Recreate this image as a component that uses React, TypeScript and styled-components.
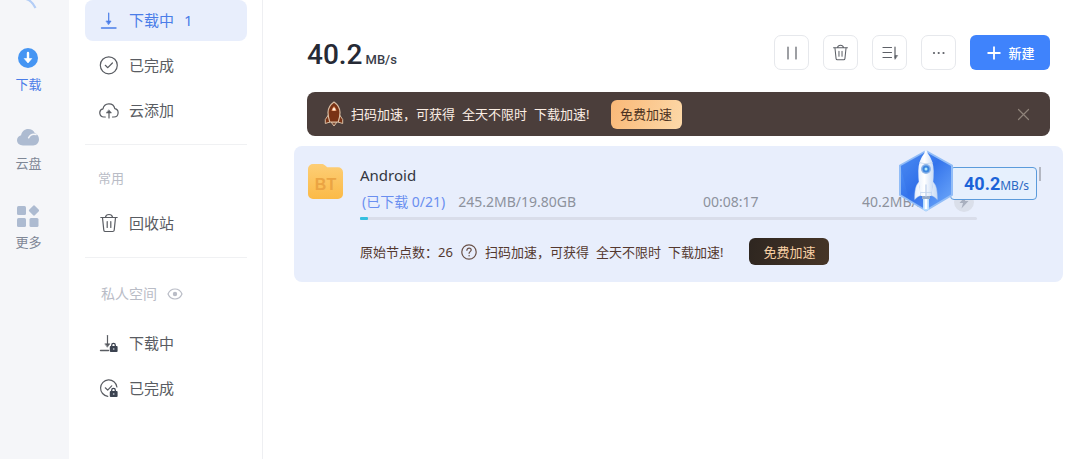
import React from 'react';
import styled, { createGlobalStyle, css } from 'styled-components';

const GlobalStyle = createGlobalStyle`
  *, *::before, *::after { box-sizing: border-box; }
  body {
    margin: 0;
    background: #fff;
    color: #43464d;
    font-family: "Noto Sans", "Noto Sans CJK SC", sans-serif;
    font-size: 13px;
    line-height: 20px;
  }
  button { font: inherit; cursor: pointer; }
  a { color: inherit; text-decoration: none; }
  svg { display: block; flex: none; }
  h1, h2, p { margin: 0; font-weight: 400; }
`;

const Shell = styled.div`
  display: flex;
  min-height: 100vh;
  overflow: hidden;
`;

/* Left rail */

const Rail = styled.nav`
  flex: none;
  width: 69px;
  padding-right: 12px;
  background: #f5f6f9;
  display: flex;
  flex-direction: column;
  align-items: center;
`;

const RailItem = styled.a<{ $active?: boolean }>`
  display: flex;
  flex-direction: column;
  align-items: center;
  gap: 5px;
  margin-bottom: 32px;
  color: ${(p) => (p.$active ? '#4a7de8' : '#7f8796')};
`;

/* Sidebar */

const Sidebar = styled.aside`
  flex: none;
  width: 194px;
  padding: 0 15px 0 16px;
  border-right: 1px solid #eeeff2;
`;

const NavGroup = styled.nav`
  display: flex;
  flex-direction: column;
  gap: 4px;
  padding-bottom: 13px;

  & ~ h2 { border-top: 1px solid #f0f1f3; }
`;

const NavItem = styled.a<{ $active?: boolean }>`
  display: flex;
  align-items: center;
  gap: 10px;
  height: 41px;
  padding: 0 0 2px 14px;
  border-radius: 8px;
  font-size: 15px;
  color: #595c62;
  ${(p) =>
    p.$active &&
    css`
      background: #e8eefc;
      color: #4a7de8;
    `}
`;

const GroupTitle = styled.h2<{ $roomy?: boolean }>`
  display: flex;
  align-items: center;
  gap: 10px;
  padding: ${(p) => (p.$roomy ? '26px 16px 19px' : '23px 13px 15px')};
  font-size: ${(p) => (p.$roomy ? '14px' : '13px')};
  line-height: 20px;
  color: #b9bcc6;
`;

const PlainButton = styled.button`
  display: flex;
  padding: 0;
  border: 0;
  background: none;
  color: inherit;
`;

/* Main column */

const Main = styled.main`
  flex: 1;
  min-width: 0;
  padding: 35px 17px 0 31px;
`;

const Header = styled.header`
  display: flex;
  align-items: center;
  justify-content: space-between;
  height: 35px;
  margin: 0 13px 22px;
`;

const TotalSpeed = styled.h1`
  padding-top: 3px;
  font-family: Roboto, sans-serif;
  font-size: 28px;
  font-weight: 500;
  line-height: 35px;
  color: #262a35;
`;

const Unit = styled.span`
  margin-left: 3px;
  font-size: 13px;
  line-height: 1;
  color: #3a3e49;
`;

const Toolbar = styled.div`
  display: flex;
  gap: 14px;
`;

const ToolButton = styled.button`
  display: flex;
  align-items: center;
  justify-content: center;
  width: 35px;
  height: 35px;
  padding: 0;
  border: 1px solid #e6e8ec;
  border-radius: 7px;
  background: #fff;
  color: #5d6067;
`;

const NewButton = styled.button`
  display: flex;
  align-items: center;
  justify-content: center;
  gap: 7px;
  width: 80px;
  height: 35px;
  padding: 0 0 0 2px;
  border: 0;
  border-radius: 6px;
  background: #3f83fc;
  color: #fff;
  font-size: 13px;
  font-weight: 500;
`;

const Banner = styled.section`
  display: flex;
  align-items: center;
  height: 44px;
  margin: 0 13px 10px;
  padding: 0 20px 0 17px;
  border-radius: 8px;
  background: #4b3e3b;
  color: #fbeee4;

  & > svg { margin-right: 7px; }
  & > button:last-child { margin-left: auto; color: #8f837a; }
`;

const Pitch = styled.p`
  display: flex;
  gap: 7px;
  white-space: nowrap;
`;

const BoostButton = styled.button<{ $dark?: boolean }>`
  border: 0;
  padding: 0;
  border-radius: 6px;
  white-space: nowrap;
  ${(p) =>
    p.$dark
      ? css`
          width: 80px;
          height: 27px;
          margin-left: 26px;
          background: linear-gradient(100deg, #2e2620, #463527);
          color: #f7cfa4;
        `
      : css`
          width: 71px;
          height: 29px;
          margin-left: 21px;
          background: linear-gradient(110deg, #f9b877, #fdd9a9);
          color: #4d3322;
        `}
`;

/* Task card */

const Card = styled.article`
  position: relative;
  display: flex;
  gap: 16px;
  padding: 17px 86px 17px 13px;
  border-radius: 8px;
  background: #e8eefc;
`;

const CardBody = styled.div`
  flex: 1;
  min-width: 0;
`;

const TaskName = styled.h2`
  font-size: 15px;
  line-height: 24px;
  color: #33363f;
`;

const Stats = styled.div`
  display: grid;
  grid-template-columns: 343fr 159fr 115fr;
  align-items: center;
  height: 30px;
  font-size: 14px;
  color: #8d929d;
`;

const StatCell = styled.div`
  display: flex;
  align-items: center;
  gap: 13px;
  min-width: 0;
  white-space: nowrap;
`;

const FileCount = styled.span`
  padding-left: 2px;
  color: #6a8ff0;
`;

const RoundIcons = styled.span`
  display: flex;
  gap: 4px;
  margin-left: auto;
  padding-right: 3px;
`;

const Track = styled.div`
  height: 3px;
  border-radius: 2px;
  background: #d9ddea;
`;

const Fill = styled.div`
  height: 3px;
  border-radius: 1px;
  background: #35bfe0;
`;

const Nodes = styled.div`
  display: flex;
  align-items: center;
  margin-top: 18px;
  color: #54382f;
`;

const HelpButton = styled(PlainButton)`
  margin: 0 8px;
  color: #6a5148;
`;

/* Floating speed widget that hovers over the card */

const FloatingSpeed = styled.div`
  position: absolute;
  top: 3px;
  right: 26px;
  display: flex;
  align-items: center;
`;

const SpeedTag = styled.div`
  display: flex;
  align-items: baseline;
  width: 87px;
  height: 33px;
  margin: 4px 0 0 -5px;
  padding-left: 13px;
  border: 1px solid #5b9bdb;
  border-radius: 4px;
  background: #e6f0fd;
  line-height: 31px;
  color: #2a68c4;
`;

const SpeedDigits = styled.strong`
  font-family: Roboto, sans-serif;
  font-size: 18px;
  color: #1b63d8;
`;

const SpeedUnit = styled.span`
  font-size: 12px;
`;

const HexWrap = styled.div`
  position: relative;
  z-index: 1;
`;

const Scroller = styled.span`
  position: absolute;
  top: 21px;
  right: 22px;
  width: 2px;
  height: 14px;
  background: #b3b7c2;
`;

/* Icons */

const stroke = {
  fill: 'none',
  stroke: 'currentColor',
  strokeWidth: 1.2,
  strokeLinecap: 'round' as const,
  strokeLinejoin: 'round' as const,
};

const AvatarRing = () => (
  <svg width="57" height="47" viewBox="0 0 57 47" fill="none">
    <path d="M26 -1C30 0 33 3 35.500 8" stroke="#b3cdf6" strokeWidth="2.200" />
  </svg>
);

const RailDownload = () => (
  <svg width="22" height="22" viewBox="0 0 22 22">
    <circle cx="11" cy="11" r="10" fill="#4595f3" />
    <path d="M11 6v8" stroke="#fff" strokeWidth="2.400" strokeLinecap="round" />
    <path d="M7.200 11.500h7.600L11 16z" fill="#fff" stroke="#fff" strokeWidth="0.600" strokeLinejoin="round" />
  </svg>
);

const RailCloud = () => (
  <svg width="24" height="22" viewBox="0 0 24 22">
    <path d="M7 19.500C3.500 19.500 1 17.300 1 14.300c0-2.500 1.700-4.500 4.100-5C5.600 5.500 8.600 3 12.200 3c3 0 5.400 1.500 6.500 4C21.500 8 23 10.500 23 13.300c0 3.500-2.500 6.200-5.900 6.200z" fill="#adbbd1" />
    <path d="M20 8.500c-3.400-.9-6 .5-7.400 3.300" stroke="#f5f6f9" strokeWidth="1.500" fill="none" strokeLinecap="round" />
  </svg>
);

const RailMore = () => (
  <svg width="22" height="22" viewBox="0 0 22 22" fill="#adbbd1">
    <rect x="0" y="1" width="9" height="9" rx="1.500" />
    <rect x="0" y="13" width="9" height="9" rx="1.500" />
    <rect x="12.500" y="13" width="9" height="9" rx="1.500" />
    <rect x="13" y="1.500" width="8" height="8" rx="1.500" transform="rotate(45 17 5.500)" />
  </svg>
);

const Lock = () => (
  <g>
    <path d="M12.700 13.500v-1.300a1.800 1.800 0 0 1 3.600 0v1.300" fill="none" stroke="#3c4350" strokeWidth="1.300" />
    <rect x="10.800" y="13" width="7.800" height="6" rx="1" fill="#3c4350" stroke="none" />
    <circle cx="14.700" cy="16" r="0.900" fill="#aab0ba" stroke="none" />
  </g>
);

const DownloadIcon = ({ locked }: { locked?: boolean }) => (
  <svg width="20" height="20" viewBox="0 0 20 20" {...stroke}>
    <path d={locked ? 'M1.500 17.500h8' : 'M2.500 18h14.500'} strokeWidth="1.400" />
    <path d={locked ? 'M8.500 2.500v9' : 'M9.700 3v9'} />
    <path d={locked ? 'M6.200 10.800h4.600l-2.300 3.200z' : 'M7.300 11h4.800l-2.400 3.500z'} fill="currentColor" strokeWidth="0.600" />
    {locked && <Lock />}
  </svg>
);

const DoneIcon = ({ locked }: { locked?: boolean }) => (
  <svg width="20" height="20" viewBox="0 0 20 20" {...stroke}>
    {locked ? (
      <path d="M8.800 18.300A8.200 8.200 0 1 1 17.900 9" />
    ) : (
      <circle cx="9.800" cy="10.300" r="8.500" />
    )}
    <path d={locked ? 'M6.300 9.800l2.400 2.300 4-4.300' : 'M6.300 10.300l2.500 2.400 4.600-4.700'} />
    {locked && <Lock />}
  </svg>
);

const CloudAddIcon = () => (
  <svg width="20" height="20" viewBox="0 0 20 20" {...stroke}>
    <path d="M6.300 17H5A4.100 4.100 0 0 1 4 8.900 6 6 0 0 1 15.800 8.700 4.200 4.200 0 0 1 15 17h-1.500" />
    <path d="M10 18v-5" />
    <path d="M7.500 13h5L10 10z" fill="currentColor" strokeWidth="0.500" />
  </svg>
);

const TrashIcon = ({ size = 20 }: { size?: number }) => (
  <svg width={size} height={size} viewBox="0 0 20 20" {...stroke}>
    <path d="M1.800 4.500h16.400M6.500 4.200C6.800 2.500 7.800 1.500 10 1.500s3.200 1 3.500 2.700" />
    <path d="M3.500 4.800l1.300 12.400c.1.900.6 1.300 1.500 1.300h7.400c.9 0 1.400-.4 1.500-1.300l1.300-12.400" />
    <path d="M8.200 8.500v6M11.800 8.500v6" />
  </svg>
);

const EyeIcon = () => (
  <svg width="16" height="14" viewBox="0 0 16 14" {...stroke}>
    <path d="M1 7C2.500 3.500 5 2 8 2s5.500 1.500 7 5c-1.500 3.500-4 5-7 5S2.500 10.500 1 7z" />
    <circle cx="8" cy="7" r="1.600" fill="currentColor" />
  </svg>
);

const PauseIcon = () => (
  <svg width="16" height="16" viewBox="0 0 16 16" {...stroke}>
    <path d="M4 2v12M12 2v12" />
  </svg>
);

const SortIcon = () => (
  <svg width="18" height="16" viewBox="0 0 18 16" {...stroke}>
    <path d="M2 2.500h8.500M2 7.500h8.500M2 12.500h8.500M14 2v11" />
    <path d="M14 14v-3.500h2.300z" fill="currentColor" strokeWidth="0.600" />
  </svg>
);

const DotsIcon = () => (
  <svg width="14" height="4" viewBox="0 0 14 4" fill="currentColor">
    <circle cx="2" cy="2" r="1.100" />
    <circle cx="6.700" cy="2" r="1.100" />
    <circle cx="11.500" cy="2" r="1.100" />
  </svg>
);

const PlusIcon = () => (
  <svg width="14" height="14" viewBox="0 0 14 14">
    <path d="M7 .5v13M.5 7h13" stroke="#fff" strokeWidth="1.800" />
  </svg>
);

const CloseIcon = () => (
  <svg width="13" height="13" viewBox="0 0 13 13" {...stroke}>
    <path d="M1.500 1.500l10 10M11.500 1.500l-10 10" />
  </svg>
);

const HelpIcon = () => (
  <svg width="16" height="16" viewBox="0 0 16 16" {...stroke}>
    <circle cx="8" cy="8" r="7.200" />
    <path d="M5.900 6.300c0-1.300.9-2.200 2.200-2.200 1.200 0 2.100.8 2.100 1.900 0 1.600-2.100 1.700-2.100 3.300" />
    <path d="M8.100 11.600v.2" strokeWidth="1.400" />
  </svg>
);

const BannerRocket = () => (
  <svg width="20" height="26" viewBox="0 0 20 26">
    <path d="M7 21l3 4 3-4z" fill="#7b4a33" stroke="#d9bda3" strokeWidth="1" strokeLinejoin="round" />
    <path d="M5 13L1.300 18.500V22.500L6 21zM15 13l3.700 5.500V22.500L14 21z" fill="#7a3315" stroke="#d9bda3" strokeWidth="1" strokeLinejoin="round" />
    <path d="M10 1C6.500 3.500 4 7 4 11.500c0 3.500.8 6.500 1.800 9.500h8.400c1-3 1.800-6 1.800-9.500C16 7 13.500 3.500 10 1z" fill="#7a3315" stroke="#d9bda3" strokeWidth="1.200" strokeLinejoin="round" />
    <path d="M7.600 10h4.800C12 8 11.300 6.500 10 5.300 8.700 6.500 8 8 7.600 10z" fill="#e59a6c" />
    <circle cx="10" cy="8.300" r="1.200" fill="#fff0e2" />
  </svg>
);

const BtFolder = () => (
  <svg width="37" height="37" viewBox="0 0 37 37">
    <defs>
      <linearGradient id="folder" x1="0" y1="0" x2="0" y2="1">
        <stop offset="0" stopColor="#fdce76" />
        <stop offset="1" stopColor="#fbba47" />
      </linearGradient>
    </defs>
    <path d="M1 6a5 5 0 0 1 5-5h8.500c1.300 0 2.400.4 3.400 1.300L20.300 4.300H31a5 5 0 0 1 5 5V31a5 5 0 0 1-5 5H6a5 5 0 0 1-5-5z" fill="url(#folder)" />
    <text x="18.500" y="26.500" textAnchor="middle" fontFamily="Liberation Sans, sans-serif" fontWeight="700" fontSize="16" fill="#eba443">
      BT
    </text>
  </svg>
);

const GreyRound = ({ children }: { children?: React.ReactNode }) => (
  <svg width="20" height="20" viewBox="0 0 20 20">
    <circle cx="10" cy="10" r="10" fill="#dadfea" />
    {children}
  </svg>
);

const HexRocket = () => (
  <svg width="58" height="64" viewBox="0 0 58 64">
    <defs>
      <linearGradient id="hex" x1="0" y1="0" x2="1" y2="1">
        <stop offset="0" stopColor="#5a9bf8" />
        <stop offset="0.450" stopColor="#3474ec" />
        <stop offset="1" stopColor="#73adfb" />
      </linearGradient>
      <linearGradient id="hull" x1="0" y1="0" x2="1" y2="0">
        <stop offset="0" stopColor="#e9f1fd" />
        <stop offset="0.400" stopColor="#ffffff" />
        <stop offset="1" stopColor="#c9dbf5" />
      </linearGradient>
    </defs>
    <path d="M29 2L55 16.500V46L29 61.500 3 46V16.500z" fill="url(#hex)" stroke="#92bdf7" strokeWidth="2" strokeLinejoin="round" />
    <path d="M3.500 17L29 2.500V61L12 50.500z" fill="#2b68e4" opacity="0.250" />
    <path d="M26 48h6v12.500l-3 1.500-3-1.500z" fill="#b9e0ff" />
    <path d="M27.700 48h2.600v12h-2.600z" fill="#fff" />
    <path d="M22 33c-3 3-4.300 7-4.300 17.500 2.300-2.200 4-3.500 6.300-4zM36 33c3 3 4.300 7 4.300 17.500-2.300-2.200-4-3.500-6.300-4z" fill="url(#hull)" stroke="#b6cdef" strokeWidth="0.500" />
    <path d="M29 1c-1 0-1.300 1-1.500 3C23.500 9 21.300 15 21.300 22c0 9 .9 17 2.700 25h10c1.800-8 2.700-16 2.700-25 0-7-2.200-13-6.200-18C30.300 2 30 1 29 1z" fill="url(#hull)" />
    <path d="M22.500 13.500c4 1.500 9 1.500 13 0M23.500 43.500h11" stroke="#c3d5ee" strokeWidth="0.800" fill="none" />
    <path d="M25 47h8v3h-8z" fill="#96abc9" />
    <circle cx="29" cy="20" r="5" fill="#8eb5e8" />
    <circle cx="29" cy="20" r="3.500" fill="#3d87df" />
    <circle cx="29" cy="20" r="1.500" fill="#b5ecfb" />
    <path d="M29 36v11" stroke="#c3d5ee" strokeWidth="1.400" strokeLinecap="round" />
  </svg>
);

const PitchText = () => (
  <Pitch>
    <span>扫码加速，可获得</span>
    <span>全天不限时</span>
    <span>下载加速!</span>
  </Pitch>
);

export default function App() {
  const progress = 1.3;
  return (
    <>
      <GlobalStyle />
      <Shell>
        <Rail aria-label="主导航">
          <AvatarRing />
          <RailItem href="#download" $active>
            <RailDownload />
            下载
          </RailItem>
          <RailItem href="#cloud">
            <RailCloud />
            云盘
          </RailItem>
          <RailItem href="#more">
            <RailMore />
            更多
          </RailItem>
        </Rail>

        <Sidebar>
          <NavGroup>
            <NavItem href="#active" $active>
              <DownloadIcon />
              <span>下载中</span>
              <span>1</span>
            </NavItem>
            <NavItem href="#done">
              <DoneIcon />
              已完成
            </NavItem>
            <NavItem href="#cloud-add">
              <CloudAddIcon />
              云添加
            </NavItem>
          </NavGroup>
          <GroupTitle>常用</GroupTitle>
          <NavGroup>
            <NavItem href="#trash">
              <TrashIcon />
              回收站
            </NavItem>
          </NavGroup>
          <GroupTitle $roomy>
            私人空间
            <PlainButton aria-label="显示">
              <EyeIcon />
            </PlainButton>
          </GroupTitle>
          <NavGroup>
            <NavItem href="#private-active">
              <DownloadIcon locked />
              下载中
            </NavItem>
            <NavItem href="#private-done">
              <DoneIcon locked />
              已完成
            </NavItem>
          </NavGroup>
        </Sidebar>

        <Main>
          <Header>
            <TotalSpeed>
              40.2<Unit>MB/s</Unit>
            </TotalSpeed>
            <Toolbar>
              <ToolButton aria-label="暂停">
                <PauseIcon />
              </ToolButton>
              <ToolButton aria-label="删除">
                <TrashIcon size={17} />
              </ToolButton>
              <ToolButton aria-label="排序">
                <SortIcon />
              </ToolButton>
              <ToolButton aria-label="更多操作">
                <DotsIcon />
              </ToolButton>
              <NewButton>
                <PlusIcon />
                新建
              </NewButton>
            </Toolbar>
          </Header>

          <Banner>
            <BannerRocket />
            <PitchText />
            <BoostButton>免费加速</BoostButton>
            <PlainButton aria-label="关闭">
              <CloseIcon />
            </PlainButton>
          </Banner>

          <Card>
            <BtFolder />
            <CardBody>
              <TaskName>Android</TaskName>
              <Stats>
                <StatCell>
                  <FileCount>(已下载 0/21)</FileCount>
                  <span>245.2MB/19.80GB</span>
                </StatCell>
                <StatCell>00:08:17</StatCell>
                <StatCell>
                  40.2MB/s
                  <RoundIcons>
                    <GreyRound>
                      <path d="M12 3.500L5.500 11H9l-1.500 5.500L14.500 9H11z" fill="#a9b0bf" />
                    </GreyRound>
                  </RoundIcons>
                </StatCell>
              </Stats>
              <Track role="progressbar" aria-label="下载进度" aria-valuenow={progress}>
                <Fill style={{ width: `${progress}%` }} />
              </Track>
              <Nodes>
                <span>原始节点数：26</span>
                <HelpButton aria-label="帮助">
                  <HelpIcon />
                </HelpButton>
                <PitchText />
                <BoostButton $dark>免费加速</BoostButton>
              </Nodes>
            </CardBody>
            <FloatingSpeed>
              <HexWrap>
                <HexRocket />
              </HexWrap>
              <SpeedTag>
                <SpeedDigits>40.2</SpeedDigits>
                <SpeedUnit>MB/s</SpeedUnit>
              </SpeedTag>
            </FloatingSpeed>
            <Scroller />
          </Card>
        </Main>
      </Shell>
    </>
  );
}
